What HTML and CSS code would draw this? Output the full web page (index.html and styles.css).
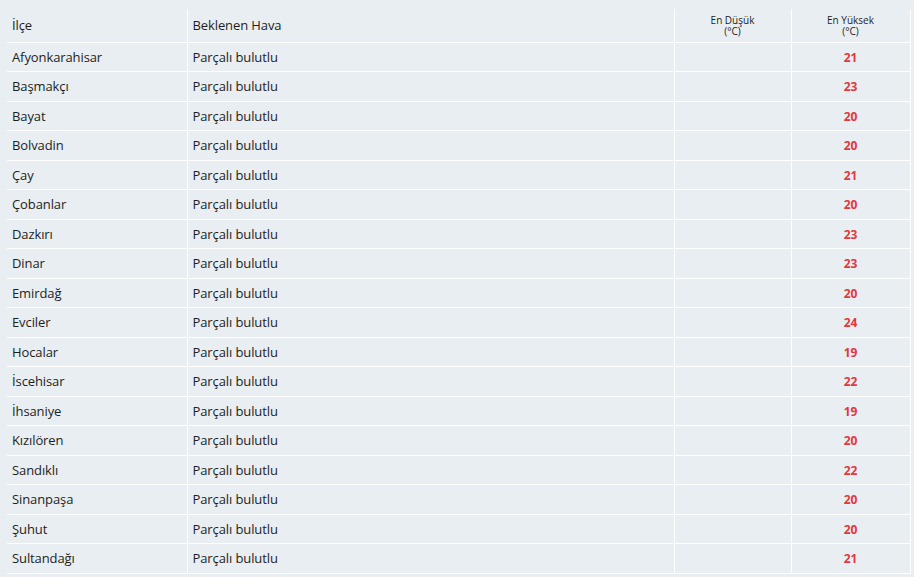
FILE: index.html
```html
<!DOCTYPE html>
<html lang="tr">
<head>
<meta charset="utf-8">
<link rel="stylesheet" href="styles.css">
</head>
<body>
<table class="wx">
  <colgroup>
    <col class="w-name">
    <col class="w-desc">
    <col class="w-lo">
    <col class="w-hi">
  </colgroup>
  <thead>
    <tr>
      <th>İlçe</th>
      <th class="c-desc">Beklenen Hava</th>
      <th class="c-num"><span class="ln">En Düşük</span><span class="ln">(°C)</span></th>
      <th class="c-num"><span class="ln">En Yüksek</span><span class="ln">(°C)</span></th>
    </tr>
  </thead>
  <tbody>
    <tr><td>Afyonkarahisar</td><td>Parçalı bulutlu</td><td></td><td class="hi">21</td></tr>
    <tr><td>Başmakçı</td><td>Parçalı bulutlu</td><td></td><td class="hi">23</td></tr>
    <tr><td>Bayat</td><td>Parçalı bulutlu</td><td></td><td class="hi">20</td></tr>
    <tr><td>Bolvadin</td><td>Parçalı bulutlu</td><td></td><td class="hi">20</td></tr>
    <tr><td>Çay</td><td>Parçalı bulutlu</td><td></td><td class="hi">21</td></tr>
    <tr><td>Çobanlar</td><td>Parçalı bulutlu</td><td></td><td class="hi">20</td></tr>
    <tr><td>Dazkırı</td><td>Parçalı bulutlu</td><td></td><td class="hi">23</td></tr>
    <tr><td>Dinar</td><td>Parçalı bulutlu</td><td></td><td class="hi">23</td></tr>
    <tr><td>Emirdağ</td><td>Parçalı bulutlu</td><td></td><td class="hi">20</td></tr>
    <tr><td>Evciler</td><td>Parçalı bulutlu</td><td></td><td class="hi">24</td></tr>
    <tr><td>Hocalar</td><td>Parçalı bulutlu</td><td></td><td class="hi">19</td></tr>
    <tr><td>İscehisar</td><td>Parçalı bulutlu</td><td></td><td class="hi">22</td></tr>
    <tr><td>İhsaniye</td><td>Parçalı bulutlu</td><td></td><td class="hi">19</td></tr>
    <tr><td>Kızılören</td><td>Parçalı bulutlu</td><td></td><td class="hi">20</td></tr>
    <tr><td>Sandıklı</td><td>Parçalı bulutlu</td><td></td><td class="hi">22</td></tr>
    <tr><td>Sinanpaşa</td><td>Parçalı bulutlu</td><td></td><td class="hi">20</td></tr>
    <tr><td>Şuhut</td><td>Parçalı bulutlu</td><td></td><td class="hi">20</td></tr>
    <tr><td>Sultandağı</td><td>Parçalı bulutlu</td><td></td><td class="hi">21</td></tr>
  </tbody>
</table>
</body>
</html>
```

FILE: styles.css
```css
html, body {
  margin: 0;
  padding: 0;
  background: #e8eef1;
}
body {
  padding: 9px 0 0 7px;
  font-family: "Open Sans", "Noto Sans", sans-serif;
  color: #1e1e1e;
}
.wx {
  border-collapse: collapse;
  width: 903px;
  table-layout: fixed;
}
.w-name { width: 180px; }
.w-desc { width: 487px; }
.w-lo { width: 117px; }
.w-hi { width: 119px; }
.wx th, .wx td {
  padding: 0 0 0 5px;
  text-align: left;
  font-weight: normal;
  font-size: 13px;
  letter-spacing: -0.1px;
  border-bottom: 1px solid #ffffff;
  border-right: 1px solid #ffffff;
  vertical-align: middle;
}
.wx th.c-desc, .wx td:nth-child(2) { padding-left: 5px; }
.wx th.c-num {
  padding: 1px 0 0 0;
  text-align: center;
  font-size: 10px;
  line-height: 11px;
  letter-spacing: 0;
}
.ln { display: block; }
.wx thead tr { height: 33px; }
.wx tbody tr { height: 29.5px; }
.wx td.hi {
  padding: 1px 0 0 0;
  text-align: center;
  color: #e0383f;
  font-weight: bold;
  font-size: 12px;
  letter-spacing: 0;
}
```
